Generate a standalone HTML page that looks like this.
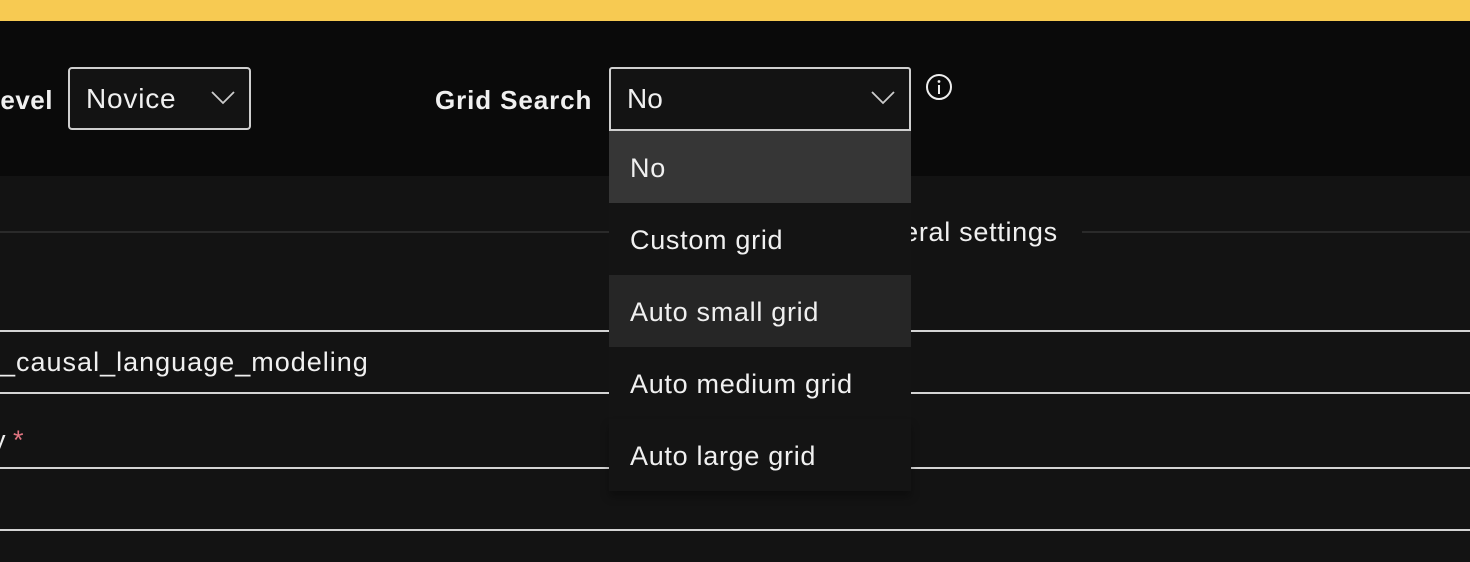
<!DOCTYPE html>
<html><head><style>
*{margin:0;padding:0;box-sizing:border-box}
body{width:1470px;height:562px;overflow:hidden;background:#131313;font-family:"Liberation Sans",sans-serif;color:#f0f0f0;position:relative}
.a{position:absolute;white-space:nowrap}
.hl{position:absolute;left:0;width:1470px;height:2px;background:#d4d4d4}
.it{position:absolute;left:609px;width:302px;height:72px;font-size:27px;padding-left:21px;line-height:74px;letter-spacing:0.7px}
</style></head><body>
<div class="a" style="left:0;top:0;width:1470px;height:21px;background:#f7ca52"></div>
<div class="a" style="left:0;top:21px;width:1470px;height:155px;background:#0a0a0a"></div>
<div class="a" style="left:-16px;top:85px;font-size:26px;font-weight:bold;letter-spacing:0.5px">Level</div>
<div class="a" style="left:68px;top:67px;width:183px;height:63px;border:2px solid #cfcfcf;border-radius:4px;background:#131313"></div>
<div class="a" style="left:86px;top:83px;font-size:28px;letter-spacing:0.8px">Novice</div>
<svg class="a" style="left:211px;top:90px" width="26" height="16"><path d="M1 2 L12 13 L23 2" stroke="#ccc" stroke-width="1.8" fill="none"/></svg>
<div class="a" style="left:435px;top:85px;font-size:26px;font-weight:bold;letter-spacing:0.9px">Grid Search</div>
<div class="a" style="left:609px;top:67px;width:302px;height:64px;border:2px solid #cfcfcf;border-radius:3px 3px 0 0;background:#131313"></div>
<div class="a" style="left:627px;top:83px;font-size:28px">No</div>
<svg class="a" style="left:871px;top:90px" width="26" height="16"><path d="M1 2 L12 13 L23 2" stroke="#ccc" stroke-width="1.8" fill="none"/></svg>
<svg class="a" style="left:925px;top:73px" width="28" height="28"><circle cx="14" cy="14" r="12" stroke="#eee" stroke-width="2" fill="none"/><rect x="13" y="12" width="2" height="9" fill="#eee"/><circle cx="14" cy="8.5" r="1.4" fill="#eee"/></svg>
<div class="a" style="left:0;top:231px;width:1470px;height:2px;background:#2a2a2a"></div>
<div class="a" style="left:850px;top:217px;font-size:27px;background:#131313;padding-right:24px;letter-spacing:0.7px">General settings</div>
<div class="hl" style="top:330px"></div>
<div class="hl" style="top:392px"></div>
<div class="hl" style="top:467px"></div>
<div class="hl" style="top:529px"></div>
<div class="a" style="left:0;top:347px;font-size:27px;letter-spacing:1px">_causal_language_modeling</div>
<div class="a" style="left:-8px;top:425px;font-size:27px">y <span style="color:#e07480">*</span></div>
<div class="it" style="top:131px;background:#363636">No</div>
<div class="it" style="top:203px;background:#141414">Custom grid</div>
<div class="it" style="top:275px;background:#262626">Auto small grid</div>
<div class="it" style="top:347px;background:#141414">Auto medium grid</div>
<div class="it" style="top:419px;background:#141414;box-shadow:0 6px 8px rgba(0,0,0,.3)">Auto large grid</div>
</body></html>
